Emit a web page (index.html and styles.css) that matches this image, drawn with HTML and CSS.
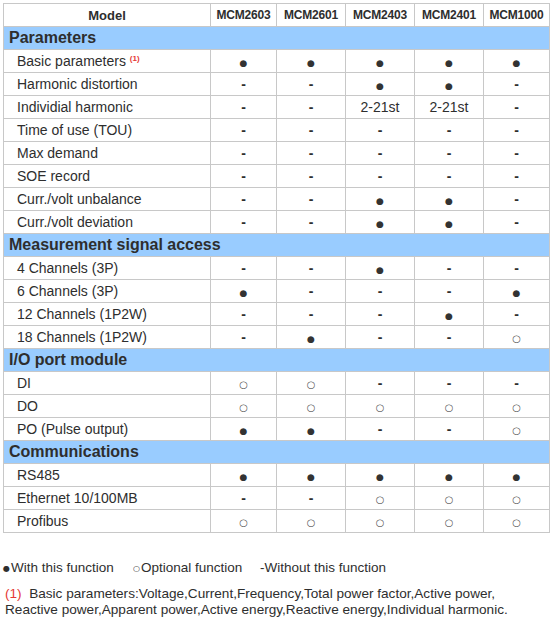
FILE: index.html
```html
<!DOCTYPE html>
<html>
<head>
<meta charset="utf-8">
<link rel="stylesheet" href="styles.css">
</head>
<body>
<table class="spec">
  <colgroup>
    <col class="c-label"><col class="c-a"><col class="c-b"><col class="c-b"><col class="c-b"><col class="c-a">
  </colgroup>
  <thead>
    <tr class="head">
      <th class="model">Model</th><th>MCM2603</th><th>MCM2601</th><th>MCM2403</th><th>MCM2401</th><th>MCM1000</th>
    </tr>
  </thead>
  <tbody>
    <tr class="sec"><td colspan="6">Parameters</td></tr>
    <tr><td class="lbl">Basic parameters <sup class="note">(1)</sup></td><td><span class="on">●</span></td><td><span class="on">●</span></td><td><span class="on">●</span></td><td><span class="on">●</span></td><td><span class="on">●</span></td></tr>
    <tr><td class="lbl">Harmonic distortion</td><td><span class="no">-</span></td><td><span class="no">-</span></td><td><span class="on">●</span></td><td><span class="on">●</span></td><td><span class="no">-</span></td></tr>
    <tr><td class="lbl">Individial harmonic</td><td><span class="no">-</span></td><td><span class="no">-</span></td><td>2-21st</td><td>2-21st</td><td><span class="no">-</span></td></tr>
    <tr><td class="lbl">Time of use (TOU)</td><td><span class="no">-</span></td><td><span class="no">-</span></td><td><span class="no">-</span></td><td><span class="no">-</span></td><td><span class="no">-</span></td></tr>
    <tr><td class="lbl">Max demand</td><td><span class="no">-</span></td><td><span class="no">-</span></td><td><span class="no">-</span></td><td><span class="no">-</span></td><td><span class="no">-</span></td></tr>
    <tr><td class="lbl">SOE record</td><td><span class="no">-</span></td><td><span class="no">-</span></td><td><span class="no">-</span></td><td><span class="no">-</span></td><td><span class="no">-</span></td></tr>
    <tr><td class="lbl">Curr./volt unbalance</td><td><span class="no">-</span></td><td><span class="no">-</span></td><td><span class="on">●</span></td><td><span class="on">●</span></td><td><span class="no">-</span></td></tr>
    <tr><td class="lbl">Curr./volt deviation</td><td><span class="no">-</span></td><td><span class="no">-</span></td><td><span class="on">●</span></td><td><span class="on">●</span></td><td><span class="no">-</span></td></tr>
    <tr class="sec"><td colspan="6">Measurement signal access</td></tr>
    <tr><td class="lbl">4 Channels (3P)</td><td><span class="no">-</span></td><td><span class="no">-</span></td><td><span class="on">●</span></td><td><span class="no">-</span></td><td><span class="no">-</span></td></tr>
    <tr><td class="lbl">6 Channels (3P)</td><td><span class="on">●</span></td><td><span class="no">-</span></td><td><span class="no">-</span></td><td><span class="no">-</span></td><td><span class="on">●</span></td></tr>
    <tr><td class="lbl">12 Channels (1P2W)</td><td><span class="no">-</span></td><td><span class="no">-</span></td><td><span class="no">-</span></td><td><span class="on">●</span></td><td><span class="no">-</span></td></tr>
    <tr><td class="lbl">18 Channels (1P2W)</td><td><span class="no">-</span></td><td><span class="on">●</span></td><td><span class="no">-</span></td><td><span class="no">-</span></td><td><span class="opt">○</span></td></tr>
    <tr class="sec"><td colspan="6">I/O port module</td></tr>
    <tr><td class="lbl">DI</td><td><span class="opt">○</span></td><td><span class="opt">○</span></td><td><span class="no">-</span></td><td><span class="no">-</span></td><td><span class="no">-</span></td></tr>
    <tr><td class="lbl">DO</td><td><span class="opt">○</span></td><td><span class="opt">○</span></td><td><span class="opt">○</span></td><td><span class="opt">○</span></td><td><span class="opt">○</span></td></tr>
    <tr><td class="lbl">PO (Pulse output)</td><td><span class="on">●</span></td><td><span class="on">●</span></td><td><span class="no">-</span></td><td><span class="no">-</span></td><td><span class="opt">○</span></td></tr>
    <tr class="sec"><td colspan="6">Communications</td></tr>
    <tr><td class="lbl">RS485</td><td><span class="on">●</span></td><td><span class="on">●</span></td><td><span class="on">●</span></td><td><span class="on">●</span></td><td><span class="on">●</span></td></tr>
    <tr><td class="lbl">Ethernet 10/100MB</td><td><span class="no">-</span></td><td><span class="no">-</span></td><td><span class="opt">○</span></td><td><span class="opt">○</span></td><td><span class="opt">○</span></td></tr>
    <tr><td class="lbl">Profibus</td><td><span class="opt">○</span></td><td><span class="opt">○</span></td><td><span class="opt">○</span></td><td><span class="opt">○</span></td><td><span class="opt">○</span></td></tr>
  </tbody>
</table>

<div class="legend">
  <span class="leg leg-on"><span class="lsym">●</span>With this function</span>
  <span class="leg leg-opt"><span class="lsym">○</span>Optional function</span>
  <span class="leg leg-no">-Without this function</span>
</div>

<p class="footnote"><span class="fn-mark">(1)</span>&nbsp; Basic parameters:Voltage,Current,Frequency,Total power factor,Active power,<br>Reactive power,Apparent power,Active energy,Reactive energy,Individual harmonic.</p>
</body>
</html>
```
FILE: styles.css
```css
html, body {
  margin: 0;
  padding: 0;
  background: #fff;
}
body {
  padding: 3px 0 0 3px;
  font-family: "Liberation Sans", Arial, sans-serif;
  color: #2e2e2e;
}
.spec {
  border-collapse: collapse;
  table-layout: fixed;
  width: 547px;
}
.c-label { width: 207px; }
.c-a { width: 66px; }
.c-b { width: 69px; }
.spec th, .spec td {
  border: 1px solid #c8c8c8;
  padding: 0;
  height: 22px;
  text-align: center;
  vertical-align: middle;
  white-space: nowrap;
  font-size: 14px;
}
.head th {
  font-weight: bold;
  font-size: 12px;
  letter-spacing: -0.2px;
}
.head th.model {
  font-size: 13px;
  letter-spacing: 0;
}
.sec td {
  background: #99ccff;
  text-align: left;
  padding-left: 5px;
  font-weight: bold;
  font-size: 16px;
}
.spec td.lbl {
  text-align: left;
  padding-left: 13px;
}
.note {
  color: #e53935;
  font-size: 8px;
  font-weight: bold;
  vertical-align: 5px;
  line-height: 0;
}
.on {
  font-family: "DejaVu Sans", sans-serif;
  font-size: 9px;
  color: #333;
}
.opt {
  font-family: "DejaVu Sans", sans-serif;
  font-size: 10px;
  color: #555;
}
.no {
  font-weight: bold;
  font-size: 14px;
}
.legend {
  display: flex;
  margin-top: 27px;
  font-size: 13.5px;
  line-height: 15px;
}
.leg-on { width: 130px; }
.leg-opt { width: 127px; }
.lsym {
  font-family: "DejaVu Sans", sans-serif;
  font-size: 8px;
  vertical-align: 1px;
  margin-right: 1px;
}
.footnote {
  margin: 10px 0 0 2px;
  font-size: 13.6px;
  line-height: 16px;
}
.fn-mark {
  color: #e53935;
}
```
